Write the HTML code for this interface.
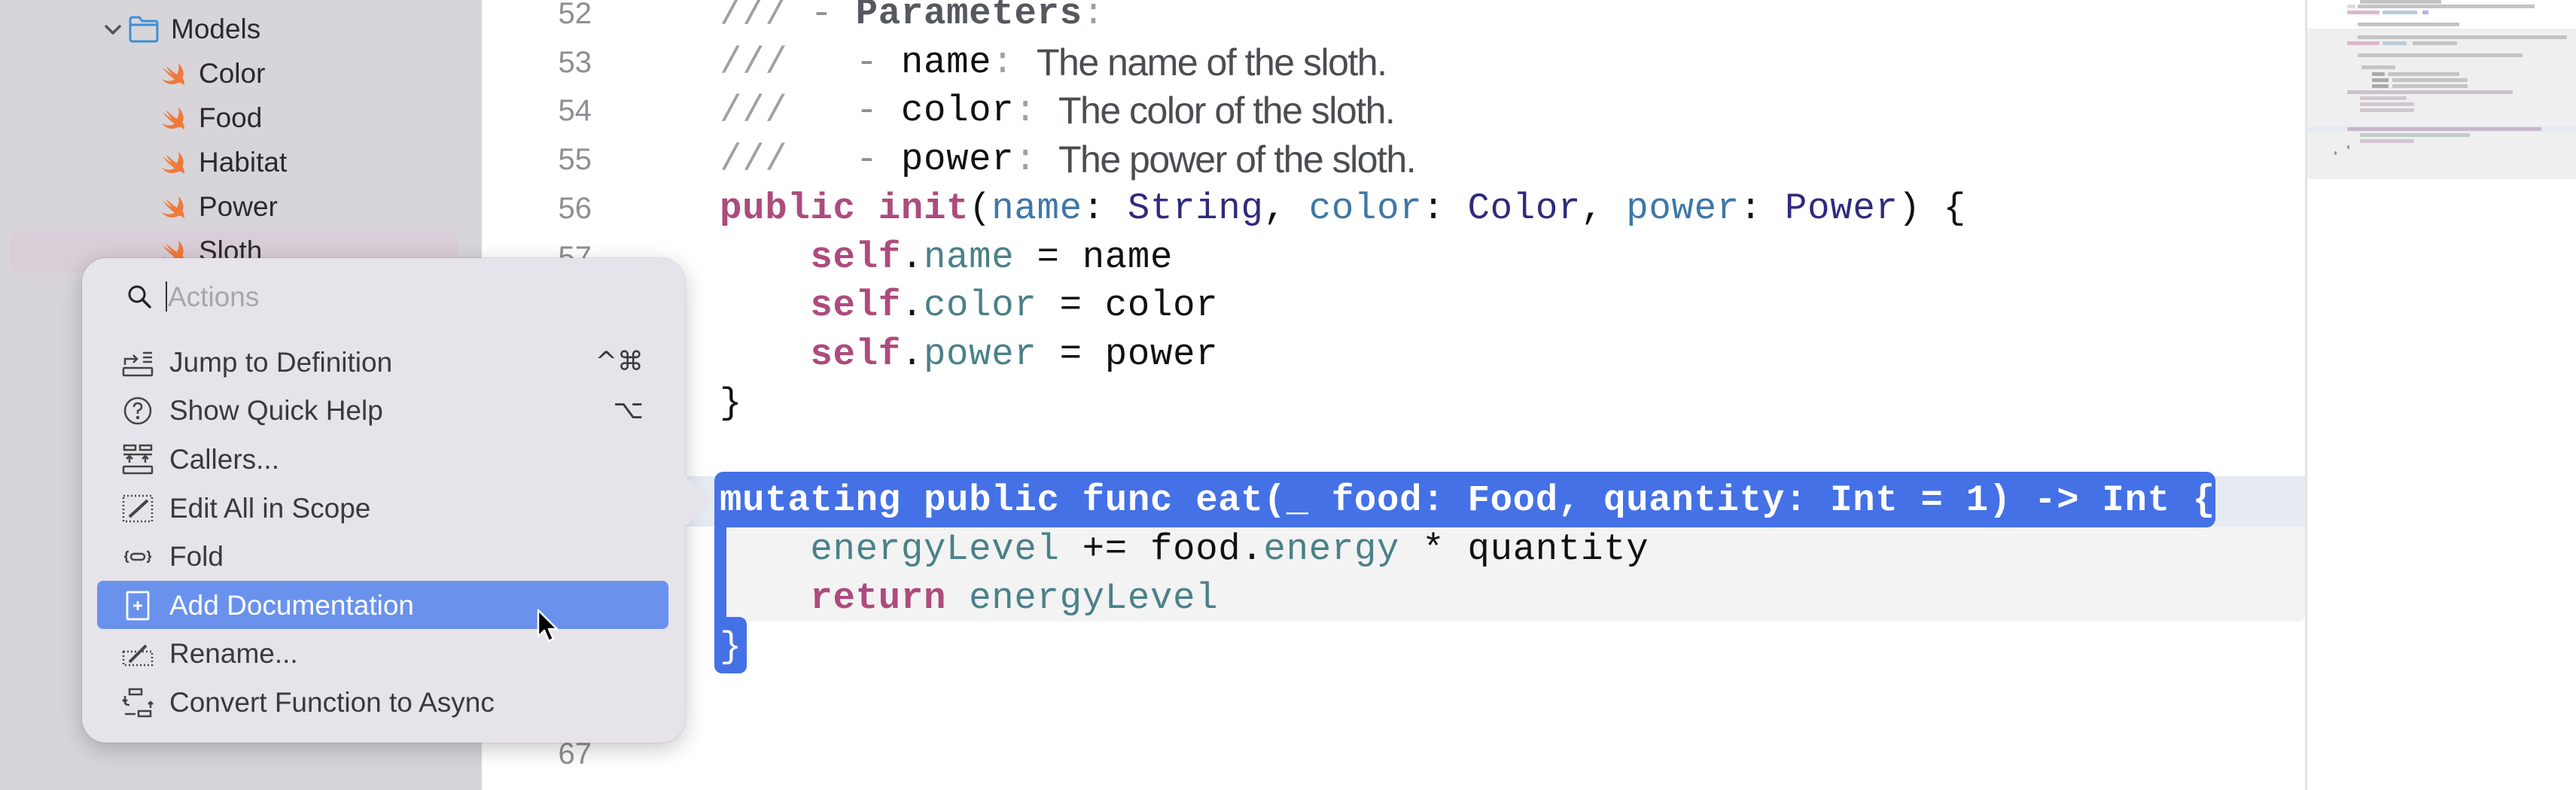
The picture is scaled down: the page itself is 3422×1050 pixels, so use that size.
<!DOCTYPE html>
<html><head><meta charset="utf-8"><style>
*{margin:0;padding:0;box-sizing:border-box}
body{width:3422px;height:1050px;overflow:hidden;background:#fff;position:relative;font-family:"Liberation Sans","DejaVu Sans",sans-serif}
.abs{position:absolute}
#side{left:0;top:0;width:640px;height:1050px;background:#d7d5d9}
.si{position:absolute;font-size:37px;color:#2a2a2c;line-height:40px;height:40px}
.ln{position:absolute;width:120px;left:666px;text-align:right;font-size:40px;color:#8e8e93;line-height:65px;height:65px}
.cl{position:absolute;left:956px;font-family:"Liberation Mono","DejaVu Sans Mono",monospace;font-size:49px;letter-spacing:0.7px;line-height:65px;height:65px;white-space:pre;color:#111}
.k{color:#ad4b7d;font-weight:bold}
.p{color:#3d77a8}
.t{color:#2f2a7c}
.pr{color:#4a8189}
.c{color:#a0a0a4}
.dd{color:#8e9094}
.ds{position:absolute;font-family:"Liberation Sans",sans-serif;font-size:50px;color:#4a4d52;line-height:65px;height:65px;white-space:pre;letter-spacing:-1.5px}
#pop{left:109px;top:343px;width:801px;height:644px;border-radius:32px;background:#e6e3ea;box-shadow:0 8px 30px rgba(0,0,0,.22),0 0 0 1px rgba(0,0,0,.08)}
.mi{position:absolute;left:225px;font-size:37px;color:#3a3a3e;line-height:40px;height:40px;white-space:pre}
.ic{position:absolute;left:162px}
.sc{position:absolute;right:2567px;font-size:35px;color:#3a3a3e;font-family:"DejaVu Sans",sans-serif}
.mm{position:absolute;height:5px;border-radius:1px}
</style></head><body>
<div id="side" class="abs"></div>
<div class="abs" style="left:13px;top:308px;width:596px;height:54px;border-radius:12px;background:#d9cdd8"></div>
<svg class="abs" style="left:136px;top:26px" width="28" height="28" viewBox="0 0 28 28"><path d="M5 9 L14 18 L23 9" fill="none" stroke="#555" stroke-width="3.5" stroke-linecap="round" stroke-linejoin="round"/></svg>
<svg class="abs" style="left:170px;top:20px" width="42" height="38" viewBox="0 0 42 38"><path d="M3 6 Q3 3 6 3 H15 L19 8 H36 Q39 8 39 11 V32 Q39 35 36 35 H6 Q3 35 3 32 Z M3 13 H39" fill="none" stroke="#3a8fd9" stroke-width="3"/></svg>
<div class="si" style="left:227px;top:19px">Models</div>
<div class="si" style="left:264px;top:78px">Color</div>
<div class="si" style="left:264px;top:137px">Food</div>
<div class="si" style="left:264px;top:196px">Habitat</div>
<div class="si" style="left:264px;top:255px">Power</div>
<div class="si" style="left:264px;top:314px">Sloth</div>
<svg width="0" height="0" style="position:absolute"><defs><symbol id="sw" viewBox="0 0 40 40"><path d="M26 4 C33 10 35 19 32 25 C35 29 35 33 34 35 C31 31 28 31 25 32 C17 36 8 33 3 26 C9 30 16 30 21 27 C14 22 8 16 4 10 C9 14 14 18 18 20 C14 16 11 12 9 8 C15 13 21 18 24 20 C27 15 28 10 26 4 Z" fill="#f0793a"/></symbol></defs></svg>
<svg class="abs" style="left:212px;top:80px" width="38" height="38"><use href="#sw"/></svg>
<svg class="abs" style="left:212px;top:139px" width="38" height="38"><use href="#sw"/></svg>
<svg class="abs" style="left:212px;top:198px" width="38" height="38"><use href="#sw"/></svg>
<svg class="abs" style="left:212px;top:257px" width="38" height="38"><use href="#sw"/></svg>
<svg class="abs" style="left:212px;top:316px" width="38" height="38"><use href="#sw"/></svg>

<div class="abs" style="left:640px;top:633px;width:2422px;height:67px;background:#e6eaf2"></div>
<div class="abs" style="left:949px;top:700px;width:2113px;height:126px;background:#f3f3f3;border-radius:0 0 10px 0"></div>
<div class="abs" style="left:949px;top:627px;width:1994px;height:74px;background:#4471e6;border-radius:12px"></div>
<div class="abs" style="left:949px;top:690px;width:16px;height:140px;background:#4471e6"></div>
<div class="abs" style="left:949px;top:820px;width:43px;height:75px;background:#4471e6;border-radius:8px 10px 10px 10px"></div>
<div class="abs" style="left:3062px;top:0;width:3px;height:1050px;background:#e4e4e6"></div>

<div class="ln" style="top:-14px">52</div>
<div class="ln" style="top:51px">53</div>
<div class="ln" style="top:115px">54</div>
<div class="ln" style="top:180px">55</div>
<div class="ln" style="top:245px">56</div>
<div class="ln" style="top:310px">57</div>
<div class="ln" style="top:970px">67</div>

<div class="cl" style="top:-14px"><span class="c">///</span> <span class="dd">-</span> <b style="color:#55595f">Parameters</b><span class="c">:</span></div>
<div class="cl" style="top:51px"><span class="c">///</span>   <span class="dd">-</span> name<span class="c">:</span></div>
<div class="ds" style="left:1377px;top:51px">The name of the sloth.</div>
<div class="cl" style="top:115px"><span class="c">///</span>   <span class="dd">-</span> color<span class="c">:</span></div>
<div class="ds" style="left:1406px;top:115px">The color of the sloth.</div>
<div class="cl" style="top:180px"><span class="c">///</span>   <span class="dd">-</span> power<span class="c">:</span></div>
<div class="ds" style="left:1406px;top:180px">The power of the sloth.</div>
<div class="cl" style="top:245px"><span class="k">public</span> <span class="k">init</span>(<span class="p">name</span>: <span class="t">String</span>, <span class="p">color</span>: <span class="t">Color</span>, <span class="p">power</span>: <span class="t">Power</span>) {</div>
<div class="cl" style="top:310px">    <span class="k">self</span>.<span class="pr">name</span> = name</div>
<div class="cl" style="top:374px">    <span class="k">self</span>.<span class="pr">color</span> = color</div>
<div class="cl" style="top:439px">    <span class="k">self</span>.<span class="pr">power</span> = power</div>
<div class="cl" style="top:504px">}</div>
<div class="cl" style="top:633px;color:#fff;font-weight:bold">mutating public func eat(_ food: Food, quantity: Int = 1) -> Int {</div>
<div class="cl" style="top:698px">    <span class="pr">energyLevel</span> += food.<span class="pr">energy</span> * quantity</div>
<div class="cl" style="top:763px">    <span class="k">return</span> <span class="pr">energyLevel</span></div>
<div class="cl" style="top:828px;color:#fff">}</div>

<div class="abs" style="left:3065px;top:38px;width:357px;height:200px;background:#efefef"></div>
<div class="mm" style="left:3135px;top:0;width:108px;background:#c4c4c4"></div>
<div class="mm" style="left:3118px;top:6px;width:11px;background:#ddd"></div><div class="mm" style="left:3132px;top:6px;width:235px;background:#c4c4c4"></div>
<div class="mm" style="left:3118px;top:14px;width:43px;background:#dcb8c8"></div><div class="mm" style="left:3165px;top:14px;width:46px;background:#b8cdd8"></div><div class="mm" style="left:3218px;top:14px;width:8px;background:#b7b0e8"></div>
<div class="mm" style="left:3132px;top:30px;width:135px;background:#c4c4c4"></div>
<div class="mm" style="left:3132px;top:47px;width:278px;background:#c4c4c4"></div>
<div class="mm" style="left:3118px;top:55px;width:43px;background:#dcb8c8"></div><div class="mm" style="left:3165px;top:55px;width:32px;background:#b8cdd8"></div><div class="mm" style="left:3205px;top:55px;width:59px;background:#c4c4c4"></div>
<div class="mm" style="left:3132px;top:71px;width:219px;background:#c4c4c4"></div>
<div class="mm" style="left:3137px;top:87px;width:45px;background:#c4c4c4"></div>
<div class="mm" style="left:3151px;top:96px;width:17px;background:#aaa"></div><div class="mm" style="left:3172px;top:96px;width:95px;background:#c4c4c4"></div>
<div class="mm" style="left:3151px;top:104px;width:22px;background:#aaa"></div><div class="mm" style="left:3178px;top:104px;width:100px;background:#c4c4c4"></div>
<div class="mm" style="left:3151px;top:112px;width:22px;background:#aaa"></div><div class="mm" style="left:3178px;top:112px;width:100px;background:#c4c4c4"></div>
<div class="mm" style="left:3118px;top:120px;width:220px;background:#cdbfd0"></div>
<div class="mm" style="left:3135px;top:128px;width:62px;background:#d2c6d0"></div>
<div class="mm" style="left:3135px;top:136px;width:72px;background:#d2c6d0"></div>
<div class="mm" style="left:3135px;top:144px;width:72px;background:#d2c6d0"></div>
<div class="mm" style="left:3065px;top:168px;width:357px;height:7px;background:#e6eaf2"></div>
<div class="mm" style="left:3118px;top:169px;width:258px;background:#c8b8cc"></div>
<div class="mm" style="left:3135px;top:177px;width:146px;background:#bfcccc"></div>
<div class="mm" style="left:3135px;top:185px;width:72px;background:#d2c6d0"></div>
<div class="mm" style="left:3118px;top:193px;width:3px;background:#999"></div>
<div class="mm" style="left:3101px;top:201px;width:3px;background:#999"></div>

<div id="pop" class="abs"></div>
<svg class="abs" style="left:908px;top:630px" width="40" height="72" viewBox="0 0 40 72"><path d="M0 0 L34 33 Q36 36 34 39 L0 72 Z" fill="#e6e3ea"/></svg>
<svg class="abs" style="left:168px;top:377px" width="36" height="36" viewBox="0 0 36 36"><circle cx="14" cy="14" r="10" fill="none" stroke="#222" stroke-width="3"/><path d="M21 21 L31 31" stroke="#222" stroke-width="3.5" stroke-linecap="round"/></svg>
<div class="abs" style="left:220px;top:374px;width:2px;height:40px;background:#333"></div>
<div class="mi" style="top:375px;left:223px;color:#a8a5ae">Actions</div>

<div class="abs" style="left:129px;top:772px;width:759px;height:64px;border-radius:8px;background:#6a92ec"></div>

<svg class="ic" style="top:461px" width="42" height="42" viewBox="0 0 42 42" fill="none" stroke="#444" stroke-width="2.5"><rect x="2" y="28" width="38" height="10" rx="1"/><path d="M4 24 V16 H20 M15 11 L20 16 L15 21 M28 8 H40 M28 14 H40 M28 20 H40"/></svg>
<svg class="ic" style="top:525px" width="42" height="42" viewBox="0 0 42 42" fill="none" stroke="#444" stroke-width="2.5"><circle cx="21" cy="21" r="17"/><path d="M16 16 Q16 11 21 11 Q26 11 26 16 Q26 19 21 21 V25"/><circle cx="21" cy="30" r="1" fill="#444"/></svg>
<svg class="ic" style="top:590px" width="42" height="42" viewBox="0 0 42 42" fill="none" stroke="#444" stroke-width="2.5"><rect x="3" y="2" width="15" height="6"/><rect x="24" y="2" width="15" height="6"/><path d="M2 14 H40 M10 25 V16 M6 20 L10 16 L14 20 M31 25 V16 M27 20 L31 16 L35 20"/><rect x="2" y="30" width="38" height="9" rx="1"/></svg>
<svg class="ic" style="top:655px" width="42" height="42" viewBox="0 0 42 42" fill="none" stroke="#444" stroke-width="2.5"><rect x="2" y="4" width="38" height="34" stroke-dasharray="2 3"/><path d="M10 32 L34 10" stroke-width="4"/></svg>
<svg class="ic" style="top:719px" width="42" height="42" viewBox="0 0 42 42" fill="none" stroke="#444" stroke-width="2.5"><path d="M9 14 Q5 14 6 18 Q6 21 3 21 Q6 21 6 24 Q5 28 9 28 M33 14 Q37 14 36 18 Q36 21 39 21 Q36 21 36 24 Q37 28 33 28"/><rect x="12" y="17" width="18" height="8" rx="4"/></svg>
<svg class="ic" style="top:784px" width="42" height="42" viewBox="0 0 42 42" fill="none" stroke="#fff" stroke-width="2.8"><rect x="7" y="3" width="28" height="36" rx="1"/><path d="M21 15 V27 M15 21 H27"/></svg>
<svg class="ic" style="top:848px" width="42" height="42" viewBox="0 0 42 42" fill="none" stroke="#444" stroke-width="2.5"><rect x="2" y="18" width="38" height="18" stroke-dasharray="2 3"/><path d="M10 32 L32 10" stroke-width="4"/></svg>
<svg class="ic" style="top:913px" width="42" height="42" viewBox="0 0 42 42" fill="none" stroke="#444" stroke-width="2.5"><rect x="10" y="3" width="16" height="7"/><rect x="22" y="32" width="16" height="7"/><path d="M4 12 V20 M1 17 L4 20 L7 17 M4 20 Q4 24 10 24 M38 20 V28 M35 23 L38 20 L41 23 M4 36 H18"/></svg>

<div class="mi" style="top:462px">Jump to Definition</div>
<div class="mi" style="top:526px">Show Quick Help</div>
<div class="mi" style="top:591px">Callers...</div>
<div class="mi" style="top:656px">Edit All in Scope</div>
<div class="mi" style="top:720px">Fold</div>
<div class="mi" style="top:785px;color:#fff">Add Documentation</div>
<div class="mi" style="top:849px">Rename...</div>
<div class="mi" style="top:914px">Convert Function to Async</div>
<div class="sc" style="top:461px">^⌘</div>
<div class="sc" style="top:525px">⌥</div>

<svg class="abs" style="left:712px;top:808px" width="34" height="50" viewBox="0 0 34 50"><path d="M3 3 L3 38 L11 30 L17 44 L23 41 L17 28 L28 28 Z" fill="#000" stroke="#fff" stroke-width="2.5" stroke-linejoin="round"/></svg>
</body></html>
